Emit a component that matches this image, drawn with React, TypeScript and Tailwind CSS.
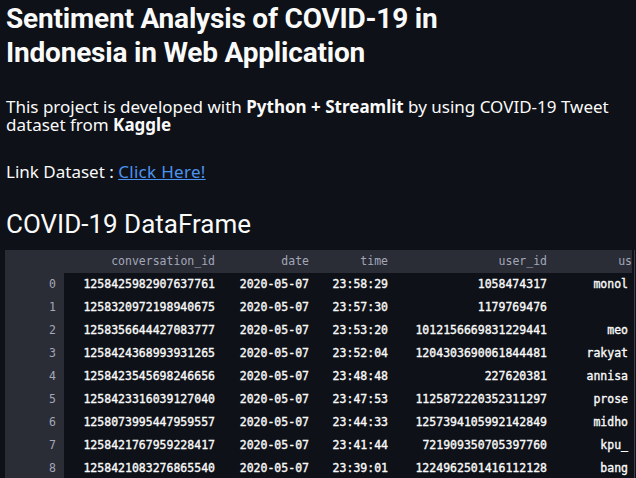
import React from "react";

const rows = [
  ["0", "1258425982907637761", "2020-05-07", "23:58:29", "1058474317", "monol"],
  ["1", "1258320972198940675", "2020-05-07", "23:57:30", "1179769476", ""],
  ["2", "1258356644427083777", "2020-05-07", "23:53:20", "1012156669831229441", "meo"],
  ["3", "1258424368993931265", "2020-05-07", "23:52:04", "1204303690061844481", "rakyat"],
  ["4", "1258423545698246656", "2020-05-07", "23:48:48", "227620381", "annisa"],
  ["5", "1258423316039127040", "2020-05-07", "23:47:53", "1125872220352311297", "prose"],
  ["6", "1258073995447959557", "2020-05-07", "23:44:33", "1257394105992142849", "midho"],
  ["7", "1258421767959228417", "2020-05-07", "23:41:44", "721909350705397760", "kpu_"],
  ["8", "1258421083276865540", "2020-05-07", "23:39:01", "1224962501416112128", "bang"],
];

const roboto = { fontFamily: 'Roboto, "Noto Sans", sans-serif' };
const noto = { fontFamily: '"Noto Sans", "Open Sans", sans-serif' };
const mono = { fontFamily: '"DejaVu Sans Mono", "Liberation Mono", monospace' };

export default function App() {
  return (
    <div className="w-[636px] h-[478px] overflow-hidden bg-[#0e1117] text-[#fafafa]" style={roboto}>
      <div className="pl-[6px] pt-[2px]">
        <h1 className="text-[28px] font-bold leading-[34px] tracking-[-0.2px]">
          Sentiment Analysis of COVID-19 in
          <br />
          Indonesia in Web Application
        </h1>
        <p className="mt-[28px] text-[17px] leading-[18px]" style={noto}>
          This project is developed with <b>Python + Streamlit</b> by using COVID-19 Tweet
          <br />
          dataset from <b>Kaggle</b>
        </p>
        <p className="mt-[28px] text-[17px] leading-[19px]" style={noto}>
          Link Dataset : <a className="text-[#4c93f0] underline tracking-[0.3px]">Click Here!</a>
        </p>
        <h2 className="mt-[27px] text-[26px] leading-[32px] font-normal">COVID-19 DataFrame</h2>
      </div>
      <div className="mt-[10px] ml-[5px] w-[630px] flex border-r border-[#3b3d48]">
        <div className="w-[627px] overflow-hidden text-[11.5px] font-normal" style={mono}>
          <div className="flex h-[23px] items-center bg-[#2a2c36] text-[#a3a8b8]">
            <div className="w-[59px] shrink-0" />
            <div className="w-[158px] shrink-0 text-right pr-[7px]">conversation_id</div>
            <div className="w-[94px] shrink-0 text-right pr-[7px]">date</div>
            <div className="w-[79px] shrink-0 text-right pr-[7px]">time</div>
            <div className="w-[159px] shrink-0 text-right pr-[7px]">user_id</div>
            <div className="w-[78px] shrink-0 text-right pr-[0px] overflow-hidden whitespace-nowrap">us</div>
          </div>
          {rows.map((r) => (
            <div key={r[0]} className="flex h-[23px] items-center">
              <div className="w-[59px] shrink-0 h-full flex items-center justify-end pr-[8px] bg-[#2a2c36] text-[#a3a8b8]">
                {r[0]}
              </div>
              <div className="flex items-center [-webkit-text-stroke:0.35px]">
                <div className="w-[158px] shrink-0 text-right pr-[7px]">{r[1]}</div>
                <div className="w-[94px] shrink-0 text-right pr-[7px]">{r[2]}</div>
                <div className="w-[79px] shrink-0 text-right pr-[7px]">{r[3]}</div>
                <div className="w-[159px] shrink-0 text-right pr-[7px]">{r[4]}</div>
                <div className="w-[78px] shrink-0 text-right pr-[4px] whitespace-nowrap">{r[5]}</div>
              </div>
            </div>
          ))}
        </div>
      </div>
    </div>
  );
}
